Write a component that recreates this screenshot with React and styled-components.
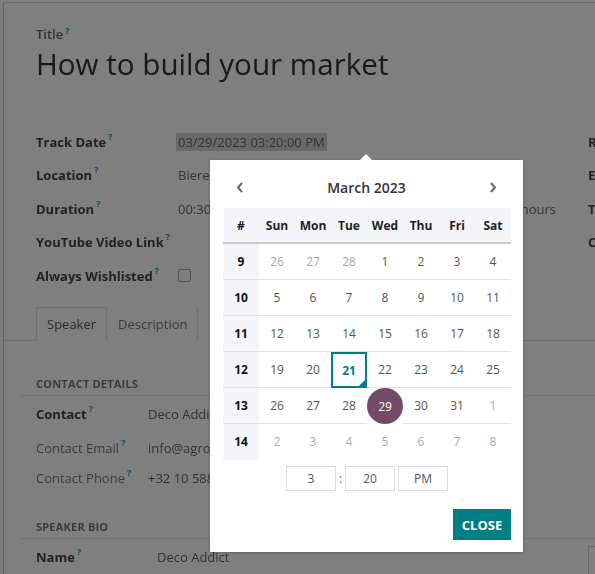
import React from "react";
import styled, { createGlobalStyle } from "styled-components";

const GlobalStyle = createGlobalStyle`
  html, body { margin: 0; padding: 0; }
  body {
    width: 595px; height: 574px; overflow: hidden; background: #fff;
    font-family: "Open Sans", "Noto Sans", sans-serif;
  }
`;

const Viewport = styled.div`
  position: relative;
  width: 595px;
  height: 574px;
  overflow: hidden;
`;

const Page = styled.div`
  filter: blur(0.6px);
  height: 574px;
  padding-top: 2px;
  box-sizing: border-box;
`;

const Sheet = styled.div`
  margin-left: 3px;
  border-left: 1px solid #c9c9c9;
  border-top: 1px solid #dcdcdc;
  height: 100%;
  padding-top: 22px;
  box-sizing: border-box;
`;

const Inner = styled.div`
  padding-left: 32px;
`;

const Help = styled.sup`
  color: #2e8fd0;
  font-size: 9px;
  font-weight: 700;
  margin-left: 2px;
  vertical-align: top;
  position: relative;
  top: -3px;
`;

const TitleLabel = styled.div`
  font-size: 13px;
  line-height: 18px;
  font-weight: 600;
  color: #666;
`;

const TitleText = styled.h1`
  margin: 2px 0 0;
  font-size: 29.6px;
  line-height: 38px;
  font-weight: 400;
  color: #333;
  white-space: nowrap;
`;

const Groups = styled.div`
  display: flex;
  margin-top: 42px;
`;

const Group = styled.div`
  display: flex;
  flex-direction: column;
  flex-shrink: 0;
  width: ${(p) => p.$w}px;
`;

const FieldRow = styled.div`
  display: grid;
  grid-template-columns: ${(p) => p.$label || 142}px 1fr;
  align-items: center;
  height: 33.5px;
  font-size: 13px;
  color: #555;
`;

const FieldLabel = styled.div`
  font-weight: ${(p) => (p.$light ? 400 : 700)};
  color: ${(p) => (p.$light ? "#777" : "#444")};
  white-space: nowrap;
`;

const FieldValue = styled.div`
  display: flex;
  justify-content: space-between;
  align-items: center;
  white-space: nowrap;
  color: #666;
  padding-right: ${(p) => p.$pr || 0}px;
`;

const Selected = styled.span`
  background: #d2d2d2;
  padding: 0 2px;
  margin-left: -2px;
  line-height: 18px;
`;

const Check = styled.span`
  width: 11px;
  height: 11px;
  border: 1px solid #aaa;
  border-radius: 2px;
  display: inline-block;
`;

const TabBar = styled.div`
  display: flex;
  margin-top: 14px;
  padding-left: 32px;
  border-bottom: 1px solid #dcdcdc;
  height: 33px;
`;

const Tab = styled.div`
  font-size: 13px;
  color: ${(p) => (p.$active ? "#555" : "#777")};
  padding: 0 10px;
  display: flex;
  align-items: center;
  border: 1px solid ${(p) => (p.$active ? "#dcdcdc" : "transparent")};
  border-bottom: none;
  background: #fff;
  margin-bottom: -1px;
  border-right-color: #dcdcdc;
`;

const SectionHead = styled.div`
  margin-left: 16px;
  margin-top: ${(p) => p.$mt}px;
  padding-left: 16px;
  font-size: 11px;
  font-weight: 700;
  color: #777;
  letter-spacing: 0.2px;
  line-height: 16px;
  padding-bottom: 3px;
  border-bottom: 1px solid #e4e4e4;
`;

const ContactGroup = styled.div`
  padding-left: 32px;
  margin-top: 1px;
`;

const ContactRow = styled.div`
  display: grid;
  grid-template-columns: ${(p) => p.$label}px 1fr;
  align-items: center;
  height: ${(p) => p.$h}px;
  font-size: 13px;
  white-space: nowrap;
`;

const Overlay = styled.div`
  position: absolute;
  inset: 0;
  background: rgba(0, 0, 0, 0.5);
`;

const Popover = styled.div`
  position: absolute;
  left: 210px;
  top: 160px;
  width: 313px;
  height: 392px;
  box-sizing: border-box;
  background: #fff;
  padding: 13px 12px 12px 13px;
  display: flex;
  flex-direction: column;
  font-family: "Open Sans", "Noto Sans", sans-serif;
  box-shadow: 0 1px 3px rgba(0, 0, 0, 0.25);
  &::before {
    content: "";
    position: absolute;
    top: -6px;
    left: 150px;
    border-left: 6px solid transparent;
    border-right: 6px solid transparent;
    border-bottom: 6px solid #fff;
  }
`;

const MonthBar = styled.div`
  height: 28px;
  display: flex;
  align-items: center;
  justify-content: space-between;
  padding: 0 13px 0 12px;
  margin-bottom: 7px;
`;

const MonthTitle = styled.div`
  font-size: 14px;
  font-weight: 600;
  color: #333;
`;

const NavBtn = styled.span`
  display: flex;
  align-items: center;
  width: 10px;
  justify-content: center;
`;

const Grid = styled.div`
  display: grid;
  grid-template-columns: repeat(8, 36px);
`;

const HeadCell = styled.div`
  height: 34px;
  background: #f4f5f9;
  border-bottom: 2px solid #c9c9c9;
  display: flex;
  align-items: center;
  justify-content: center;
  font-size: 12px;
  font-weight: 700;
  color: #222;
`;

const WeekCell = styled.div`
  height: 35px;
  background: #f4f5f9;
  border-bottom: 1px solid ${(p) => (p.$last ? "#f4f5f9" : "#dee2e6")};
  display: flex;
  align-items: center;
  justify-content: center;
  font-size: 12px;
  font-weight: 700;
  color: #111;
`;

const DayCell = styled.div`
  height: 35px;
  border-bottom: 1px solid ${(p) => (p.$last || p.$selected ? "#fff" : "#dee2e6")};
  display: flex;
  align-items: center;
  justify-content: center;
  font-size: 12px;
  position: relative;
  color: ${(p) => (p.$muted ? "#aaa" : "#555")};
`;

const Today = styled.span`
  position: absolute;
  top: 0;
  left: 0;
  width: 36px;
  height: 36px;
  box-sizing: border-box;
  border: 2px solid #017e84;
  color: #017e84;
  font-weight: 700;
  display: flex;
  align-items: center;
  justify-content: center;
  z-index: 1;
  &::after {
    content: "";
    position: absolute;
    right: 0;
    bottom: 0;
    border-left: 6px solid transparent;
    border-bottom: 6px solid #017e84;
  }
`;

const Chosen = styled.span`
  position: absolute;
  top: 0;
  left: 0;
  width: 36px;
  height: 36px;
  border-radius: 50%;
  background: #714b67;
  color: #fff;
  display: flex;
  align-items: center;
  justify-content: center;
  z-index: 1;
`;

const TimeRow = styled.div`
  display: flex;
  justify-content: center;
  align-items: center;
  margin-top: 6px;
  height: 25px;
`;

const TimeBox = styled.div`
  width: 50px;
  height: 25px;
  box-sizing: border-box;
  border: 1px solid #dcdcdc;
  display: flex;
  align-items: center;
  justify-content: center;
  font-size: 12px;
  color: #555;
  margin-left: ${(p) => p.$ml || 0}px;
`;

const Colon = styled.span`
  width: 9px;
  text-align: center;
  font-size: 12px;
  color: #555;
`;

const Footer = styled.div`
  display: flex;
  justify-content: flex-end;
  margin-top: auto;
`;

const CloseButton = styled.button`
  width: 58px;
  height: 31px;
  border: none;
  background: #017e84;
  color: #fff;
  font-family: inherit;
  font-size: 13px;
  font-weight: 700;
  padding: 0;
`;

const RightBox = styled.div`
  position: absolute;
  left: 588px;
  top: 546px;
  width: 40px;
  height: 40px;
  border: 1px solid #d0d0d0;
`;

const Chevron = ({ dir }) => (
  <svg width="8" height="11" viewBox="0 0 8 11">
    <path
      d={dir === "left" ? "M6 1 L2 5.5 L6 10" : "M2 1 L6 5.5 L2 10"}
      fill="none"
      stroke="#666"
      strokeWidth="2"
    />
  </svg>
);

const weeks = [
  { n: 9, days: [[26, 1], [27, 1], [28, 1], [1], [2], [3], [4]] },
  { n: 10, days: [[5], [6], [7], [8], [9], [10], [11]] },
  { n: 11, days: [[12], [13], [14], [15], [16], [17], [18]] },
  { n: 12, days: [[19], [20], [21, 0, "today"], [22], [23], [24], [25]] },
  { n: 13, days: [[26], [27], [28], [29, 0, "sel"], [30], [31], [1, 1]] },
  { n: 14, days: [[2, 1], [3, 1], [4, 1], [5, 1], [6, 1], [7, 1], [8, 1]] },
];

export default function App() {
  return (
    <Viewport>
      <GlobalStyle />
      <Page>
        <Sheet>
          <Inner>
            <TitleLabel>
              Title<Help>?</Help>
            </TitleLabel>
            <TitleText>How to build your market</TitleText>
            <Groups>
              <Group $w={552}>
                <FieldRow>
                  <FieldLabel>Track Date<Help>?</Help></FieldLabel>
                  <FieldValue><Selected>03/29/2023 03:20:00 PM</Selected></FieldValue>
                </FieldRow>
                <FieldRow>
                  <FieldLabel>Location<Help>?</Help></FieldLabel>
                  <FieldValue>Biereau Auditorium</FieldValue>
                </FieldRow>
                <FieldRow>
                  <FieldLabel>Duration<Help>?</Help></FieldLabel>
                  <FieldValue $pr={32}><span>00:30</span><span>hours</span></FieldValue>
                </FieldRow>
                <FieldRow>
                  <FieldLabel>YouTube Video Link<Help>?</Help></FieldLabel>
                  <FieldValue />
                </FieldRow>
                <FieldRow>
                  <FieldLabel>Always Wishlisted<Help>?</Help></FieldLabel>
                  <FieldValue><Check /></FieldValue>
                </FieldRow>
              </Group>
              <Group $w={200}>
                <FieldRow $label={120}><FieldLabel>Responsible</FieldLabel></FieldRow>
                <FieldRow $label={120}><FieldLabel>Event</FieldLabel></FieldRow>
                <FieldRow $label={120}><FieldLabel>Tags</FieldLabel></FieldRow>
                <FieldRow $label={120}><FieldLabel>Color</FieldLabel></FieldRow>
              </Group>
            </Groups>
          </Inner>
          <TabBar>
            <Tab $active>Speaker</Tab>
            <Tab>Description</Tab>
            <Tab>Interactivity</Tab>
          </TabBar>
          <SectionHead $mt={35}>CONTACT DETAILS</SectionHead>
          <ContactGroup>
            <ContactRow $label={112} $h={34}>
              <FieldLabel>Contact<Help>?</Help></FieldLabel>
              <FieldValue>Deco Addict</FieldValue>
            </ContactRow>
            <ContactRow $label={112} $h={34}>
              <FieldLabel $light>Contact Email<Help>?</Help></FieldLabel>
              <FieldValue>info@agrolait.com</FieldValue>
            </ContactRow>
            <ContactRow $label={112} $h={26}>
              <FieldLabel $light>Contact Phone<Help>?</Help></FieldLabel>
              <FieldValue>+32 10 588 558</FieldValue>
            </ContactRow>
          </ContactGroup>
          <SectionHead $mt={28}>SPEAKER BIO</SectionHead>
          <ContactGroup>
            <ContactRow $label={121} $h={34}>
              <FieldLabel>Name<Help>?</Help></FieldLabel>
              <FieldValue>Deco Addict</FieldValue>
            </ContactRow>
          </ContactGroup>
        </Sheet>
        <RightBox />
      </Page>
      <Overlay />
      <Popover>
        <MonthBar>
          <NavBtn><Chevron dir="left" /></NavBtn>
          <MonthTitle>March 2023</MonthTitle>
          <NavBtn><Chevron dir="right" /></NavBtn>
        </MonthBar>
        <Grid>
          {["#", "Sun", "Mon", "Tue", "Wed", "Thu", "Fri", "Sat"].map((h) => (
            <HeadCell key={h}>{h}</HeadCell>
          ))}
          {weeks.map((w, wi) => {
            const last = wi === weeks.length - 1;
            return (
              <React.Fragment key={w.n}>
                <WeekCell $last={last}>{w.n}</WeekCell>
                {w.days.map(([d, muted, kind], i) => (
                  <DayCell key={i} $muted={muted} $last={last} $selected={kind === "sel"}>
                    {kind === "today" ? (
                      <Today>{d}</Today>
                    ) : kind === "sel" ? (
                      <Chosen>{d}</Chosen>
                    ) : (
                      d
                    )}
                  </DayCell>
                ))}
              </React.Fragment>
            );
          })}
        </Grid>
        <TimeRow>
          <TimeBox>3</TimeBox>
          <Colon>:</Colon>
          <TimeBox>20</TimeBox>
          <TimeBox $ml={3}>PM</TimeBox>
        </TimeRow>
        <Footer>
          <CloseButton>CLOSE</CloseButton>
        </Footer>
      </Popover>
    </Viewport>
  );
}
